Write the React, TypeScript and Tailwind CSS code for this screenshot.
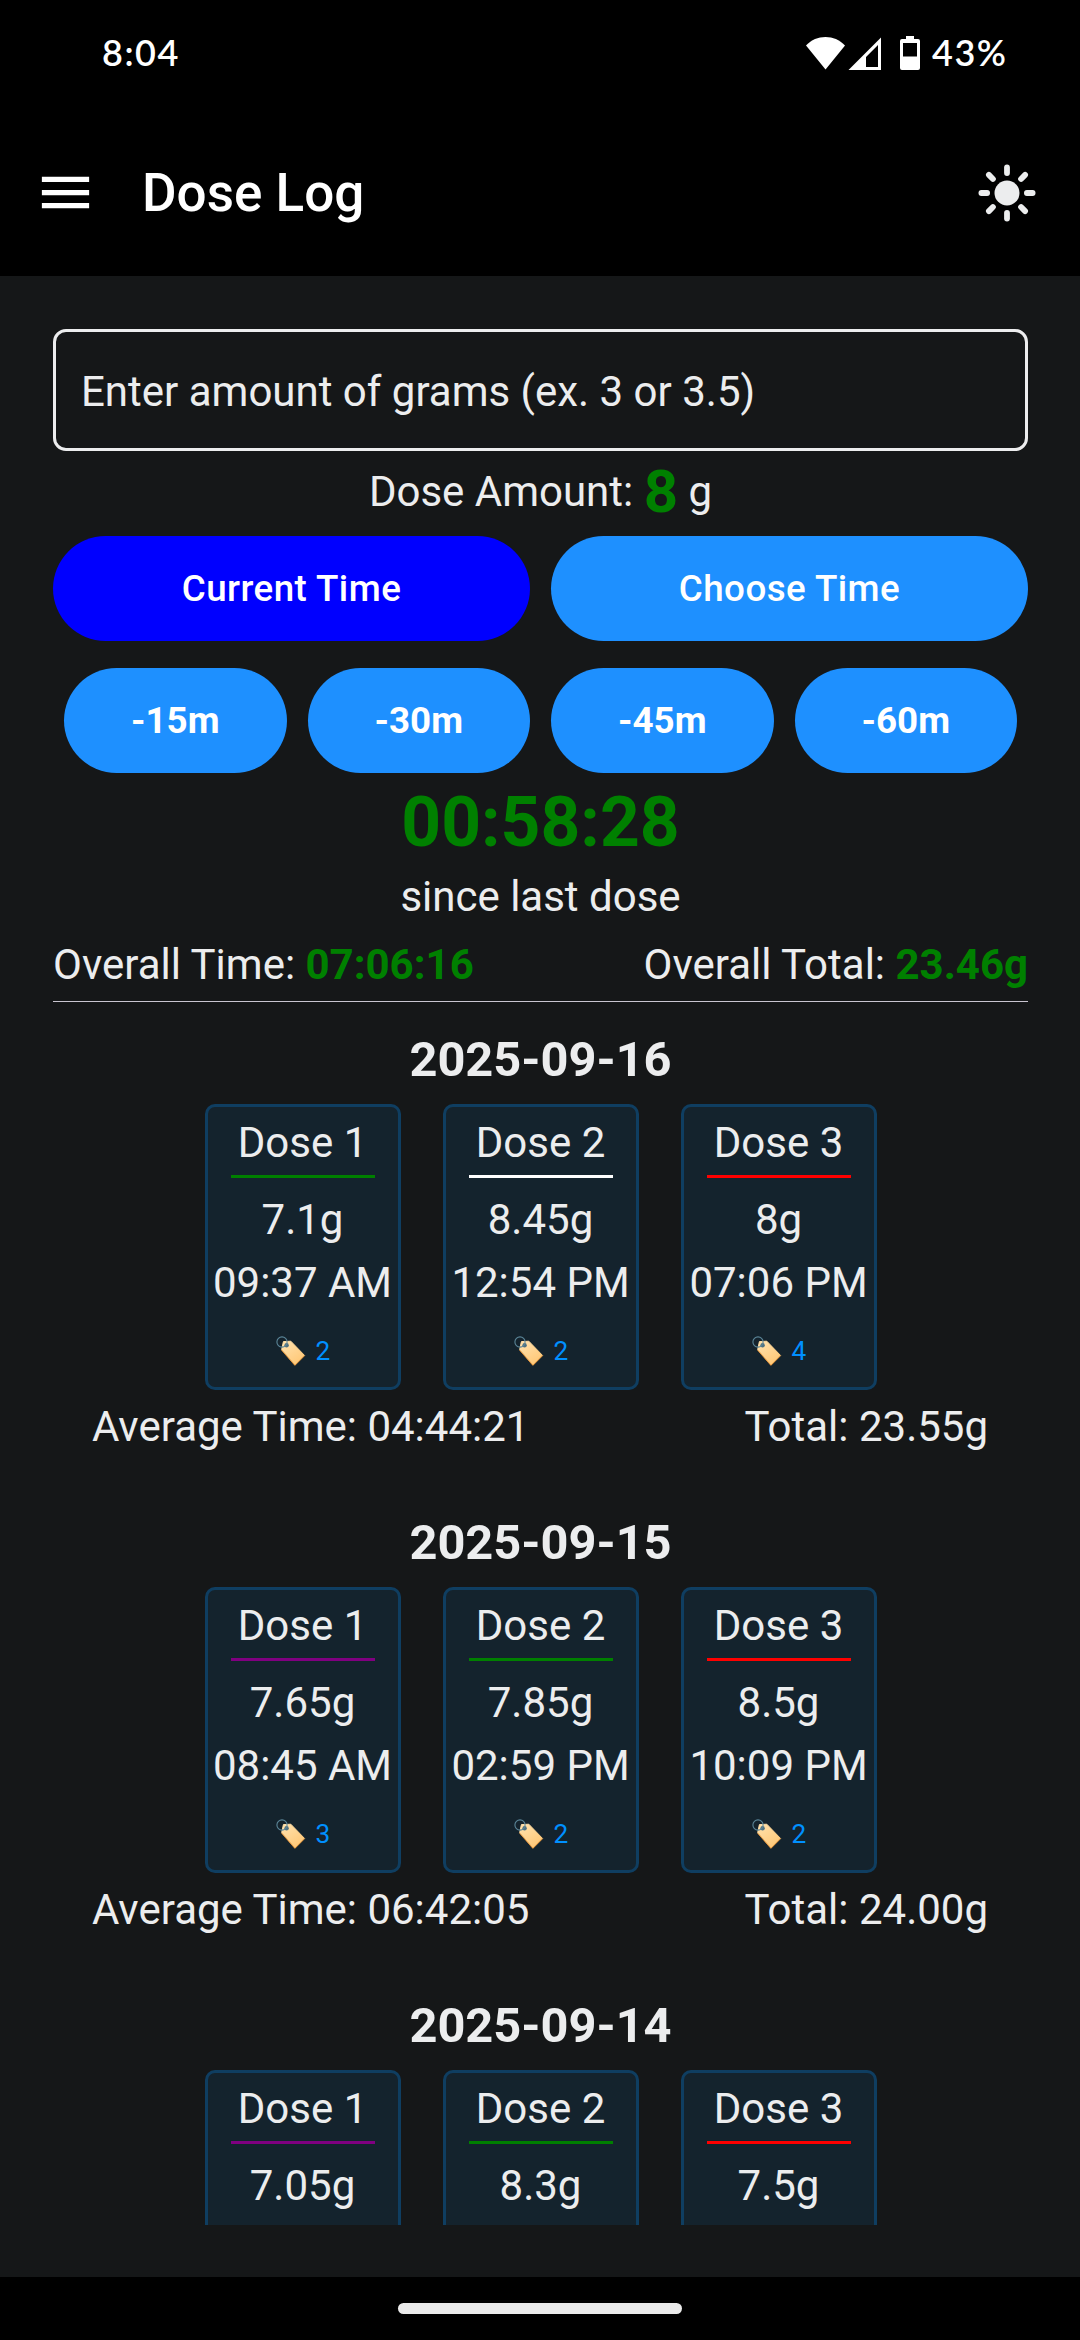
type Dose = {
    amount: string;
    time: string;
    line: string;
    tags: number;
};

type Day = {
    date: string;
    average: string;
    total: string;
    doses: Dose[];
};

const offsets = ["-15m", "-30m", "-45m", "-60m"];

const days: Day[] = [
    {
        date: "2025-09-16",
        average: "04:44:21",
        total: "23.55g",
        doses: [
            { amount: "7.1g", time: "09:37 AM", line: "border-[#008000]", tags: 2 },
            { amount: "8.45g", time: "12:54 PM", line: "border-white", tags: 2 },
            { amount: "8g", time: "07:06 PM", line: "border-[#ff0000]", tags: 4 },
        ],
    },
    {
        date: "2025-09-15",
        average: "06:42:05",
        total: "24.00g",
        doses: [
            { amount: "7.65g", time: "08:45 AM", line: "border-[#800080]", tags: 3 },
            { amount: "7.85g", time: "02:59 PM", line: "border-[#008000]", tags: 2 },
            { amount: "8.5g", time: "10:09 PM", line: "border-[#ff0000]", tags: 2 },
        ],
    },
    {
        date: "2025-09-14",
        average: "",
        total: "",
        doses: [
            { amount: "7.05g", time: "", line: "border-[#800080]", tags: 0 },
            { amount: "8.3g", time: "", line: "border-[#008000]", tags: 0 },
            { amount: "7.5g", time: "", line: "border-[#ff0000]", tags: 0 },
        ],
    },
];

function StatusBar() {
    return (
        <div className="flex h-[106px] items-center justify-between pr-[76px] pl-[102px] font-['Lato',sans-serif] text-[36px] font-semibold tracking-[1.5px] text-white">
            <span className="mb-[2px]">8:04</span>
            <div className="flex items-center">
                <svg className="h-[34px] w-[115px]" viewBox="0 0 115 34" fill="#fff">
                    <path d="M0 9.5C5.5 3.8 12 1 19.5 1S33.3 3.8 39 9.5L19.5 33.5Z" />
                    <path fillRule="evenodd" d="M42.5 34L75 1.5V34ZM60 31H72V9L60 21Z" />
                    <path
                        fillRule="evenodd"
                        d="M100 0h8v3h4a2 2 0 0 1 2 2v27a2 2 0 0 1-2 2H96a2 2 0 0 1-2-2V5a2 2 0 0 1 2-2h4ZM97 7V20.5H111V7Z"
                    />
                </svg>
                <span className="mb-[2px] ml-[11px] w-[72px]">43%</span>
            </div>
        </div>
    );
}

function SunIcon() {
    return (
        <svg className="h-[58px] w-[58px]" viewBox="-29 -29 58 58" fill="#ecedee" stroke="#ecedee">
            <circle r="12.5" stroke="none" />
            {[0, 45, 90, 135, 180, 225, 270, 315].map((angle) => (
                <path
                    key={angle}
                    d="M0 -25.6V-19.9"
                    strokeWidth="5.8"
                    strokeLinecap="round"
                    transform={`rotate(${angle})`}
                />
            ))}
        </svg>
    );
}

function TagIcon() {
    return (
        <svg className="h-[32px] w-[32px]" viewBox="0 0 32 32" fill="none">
            <defs>
                <linearGradient id="tag" x1="10" y1="8" x2="24" y2="28" gradientUnits="userSpaceOnUse">
                    <stop stopColor="#ffdfa8" />
                    <stop offset="1" stopColor="#ffc877" />
                </linearGradient>
            </defs>
            <path
                d="M8.4 6.6L15.8 6.2L29.4 20.3L20 30L6.7 14.6Z"
                fill="url(#tag)"
                stroke="url(#tag)"
                strokeLinejoin="round"
            />
            <path d="M6.5 15L19.9 30.4L29.7 20.6" stroke="#e5953a" />
            <circle cx="11.6" cy="10.3" r="2.2" fill="#4f7180" />
            <circle cx="7" cy="7" r="5.1" stroke="#5b8598" strokeWidth="1.1" />
        </svg>
    );
}

function DoseCard({ dose, index }: { dose: Dose; index: number }) {
    return (
        <div className="flex h-[286px] w-[196px] shrink-0 flex-col items-center rounded-[10px] border-[3px] border-[#0f3e61] bg-[#14232d] pt-[11px] leading-[50px] whitespace-nowrap">
            <div className={`w-[144px] border-b-[3px] pb-[7px] text-center ${dose.line}`}>Dose {index + 1}</div>
            <div className="mt-[17px]">{dose.amount}</div>
            {dose.time && (
                <>
                    <div className="mt-[13px]">{dose.time}</div>
                    <div className="mt-[26px] flex items-center gap-[9px] text-[26.25px] leading-[34px] text-[#0090ff]">
                        <TagIcon />
                        <span>{dose.tags}</span>
                    </div>
                </>
            )}
        </div>
    );
}

export default function App() {
    return (
        <div className="flex h-[2340px] w-[1080px] flex-col overflow-hidden bg-[#151718] font-['Roboto',sans-serif] text-[42px] text-[#ecedee]">
            <header className="h-[276px] shrink-0 bg-black">
                <StatusBar />
                <div className="flex h-[170px] items-center pt-[3px] pr-[44px] pl-[34px]">
                    <svg className="h-[63px] w-[63px]" viewBox="0 0 24 24" fill="#fff">
                        <path d="M3 6h18v2H3V6Zm0 5h18v2H3v-2Zm0 5h18v2H3v-2Z" />
                    </svg>
                    <h1 className="mt-[2px] ml-[45px] flex-1 text-[53px] font-medium text-white">Dose Log</h1>
                    <SunIcon />
                </div>
            </header>

            <main className="flex h-[1949px] shrink-0 flex-col overflow-hidden pt-[53px] pr-[52px] pl-[53px]">
                <div className="flex h-[122px] shrink-0 items-center rounded-[13px] border-[3px] border-[#ecedee] pt-[3px] pl-[25px]">
                    Enter amount of grams (ex. 3 or 3.5)
                </div>

                <div className="flex h-[85px] shrink-0 items-center justify-center pb-[4px] whitespace-pre">
                    <span>Dose Amount: </span>
                    <span className="text-[60px] font-bold text-[#008000]">8</span>
                    <span> g</span>
                </div>

                <div className="flex shrink-0 gap-[21px] text-[36.75px] font-medium tracking-[0.45px] text-white">
                    <button className="h-[105px] flex-1 rounded-full bg-[#0000ff]">Current Time</button>
                    <button className="h-[105px] flex-1 rounded-full bg-[#1e90ff]">Choose Time</button>
                </div>

                <div className="mt-[27px] flex shrink-0 gap-[21px] px-[11px] text-[36.75px] font-bold text-white">
                    {offsets.map((offset) => (
                        <button key={offset} className="h-[105px] flex-1 rounded-full bg-[#1e90ff]">
                            {offset}
                        </button>
                    ))}
                </div>

                <div className="shrink-0 text-center text-[69.5px] leading-[100px] font-bold text-[#008000]">00:58:28</div>
                <div className="shrink-0 text-center leading-[48px]">since last dose</div>

                <div className="mt-4 flex shrink-0 justify-between border-b border-[#c9c5d0] pb-2 leading-[56px]">
                    <div>
                        Overall Time: <span className="font-bold text-[#008000]">07:06:16</span>
                    </div>
                    <div>
                        Overall Total: <span className="font-bold text-[#008000]">23.46g</span>
                    </div>
                </div>

                <div className="min-h-0 flex-1 overflow-hidden pt-[13px]">
                    {days.map((day) => (
                        <section key={day.date} className="mb-[34px]">
                            <h2 className="text-center text-[48.75px] leading-[89px] font-bold">{day.date}</h2>
                            <div className="flex justify-center gap-[42px]">
                                {day.doses.map((dose, index) => (
                                    <DoseCard key={index} dose={dose} index={index} />
                                ))}
                            </div>
                            {day.total && (
                                <div className="flex justify-between pr-[40px] pl-[39px] leading-[74px]">
                                    <span>Average Time: {day.average}</span>
                                    <span>Total: {day.total}</span>
                                </div>
                            )}
                        </section>
                    ))}
                </div>
            </main>

            <footer className="mt-auto flex h-[63px] shrink-0 justify-center bg-black pt-[26px]">
                <div className="h-[11px] w-[284px] rounded-full bg-[#ebebeb]" />
            </footer>
        </div>
    );
}
